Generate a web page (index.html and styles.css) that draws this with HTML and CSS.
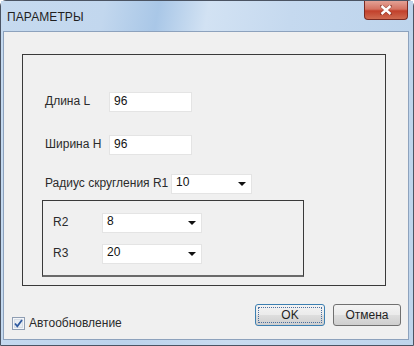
FILE: index.html
```html
<!doctype html>
<html>
  <head>
    <meta charset="utf-8">
    <link rel="stylesheet" href="styles.css">
  </head>
  <body>
    <div class="window">
      <div class="titlebar">
        <span class="title">ПАРАМЕТРЫ</span>
        <div class="close-btn">
          <svg width="12" height="10" viewBox="0 0 12 10">
            <path d="M1.5 1 L10.5 9 M10.5 1 L1.5 9" stroke="#6b2218" stroke-width="3.6" stroke-linecap="square" opacity="0.5"/>
            <path d="M1.5 1 L10.5 9 M10.5 1 L1.5 9" stroke="#ffffff" stroke-width="2.4"/>
          </svg>
        </div>
      </div>
      <div class="client">
        <div class="group">
          <div class="row row-l">
            <span class="lbl lbl-short">Длина L</span>
            <div class="edit">96</div>
          </div>
          <div class="row row-h">
            <span class="lbl lbl-short">Ширина H</span>
            <div class="edit">96</div>
          </div>
          <div class="row row-r1">
            <span class="lbl lbl-long">Радиус скругления R1</span>
            <div class="combo combo-r1"><span>10</span><i class="arrow"></i></div>
          </div>
          <div class="subgroup">
            <div class="row row-r2">
              <span class="lbl lbl-r">R2</span>
              <div class="combo combo-r"><span>8</span><i class="arrow"></i></div>
            </div>
            <div class="row row-r3">
              <span class="lbl lbl-r">R3</span>
              <div class="combo combo-r"><span>20</span><i class="arrow"></i></div>
            </div>
          </div>
        </div>
        <div class="footer">
          <label class="check">
            <svg class="checkbox" width="13" height="13" viewBox="0 0 13 13">
              <rect x="0.5" y="0.5" width="12" height="12" fill="#f4f6f9" stroke="#8f9eb3"/>
              <rect x="2.5" y="2.5" width="8" height="8" fill="#e8edf3" stroke="#d6dde6"/>
              <path d="M3 6.5 L5.3 9.3 L10 3" fill="none" stroke="#2f5aa0" stroke-width="1.8"/>
            </svg>
            <span>Автообновление</span>
          </label>
          <div class="buttons">
            <div class="btn btn-ok"><span>OK</span></div>
            <div class="btn btn-cancel"><span>Отмена</span></div>
          </div>
        </div>
      </div>
    </div>
  </body>
</html>
```

FILE: styles.css
```css
html, body {
  margin: 0;
  padding: 0;
  background: #ffffff;
}

body {
  font-family: "Liberation Sans", Arial, sans-serif;
  font-size: 12px;
  color: #2b2b2b;
}

.window {
  width: 414px;
  height: 346px;
  box-sizing: border-box;
  border: 1px solid #4b5463;
  border-radius: 6px 6px 0 0;
  padding: 0 4px 5px 2px;
  display: flex;
  flex-direction: column;
  background: linear-gradient(90deg, #c4d9ef 0%, #bcd3ec 30%, #c9dcf0 55%, #bfd5ec 100%);
}

.titlebar {
  height: 30px;
  display: flex;
  justify-content: space-between;
  align-items: flex-start;
  background: linear-gradient(100deg, #c6daef 0%, #c2d7ee 25%, #a9c7e7 38%, #d2e2f3 50%, #c5d9ef 70%, #bdd4ec 100%);
  margin: 0 -4px 0 -2px;
  padding: 0 5px 0 6px;
}

.title {
  padding-top: 9px;
  font-size: 12px;
  color: #1f1f1f;
  letter-spacing: 0.1px;
}

.close-btn {
  width: 44px;
  height: 19px;
  box-sizing: border-box;
  border: 1px solid #7a2a22;
  border-top: none;
  border-radius: 0 0 4px 4px;
  background: linear-gradient(180deg, #e3a195 0%, #d47362 45%, #c2402b 55%, #cf6a50 100%);
  display: flex;
  align-items: center;
  justify-content: center;
}

.close-btn svg { display: block; }

.client {
  flex: 1;
  background: #f0f0f0;
  border: 1px solid #8da2bd;
  display: flex;
  flex-direction: column;
}

.group {
  margin: 22px 0 0 18px;
  width: 364px;
  height: 232px;
  box-sizing: border-box;
  border: 1px solid #3a3a3a;
  display: flex;
  flex-direction: column;
}

.row {
  display: flex;
  align-items: center;
  height: 20px;
  margin-left: 22px;
}

.row-l { margin-top: 37px; }
.row-h { margin-top: 23px; }
.row-r1 { margin-top: 19px; }

.lbl {
  margin-top: -3px;
  white-space: nowrap;
}

.lbl-short { width: 64px; }
.lbl-long { width: 126px; }
.lbl-r { width: 49px; }

.edit,
.combo {
  height: 20px;
  box-sizing: border-box;
  background: #ffffff;
  border: 1px solid #e4e4e4;
  padding: 0 4px;
  line-height: 17px;
  color: #111111;
}

.edit { width: 83px; }

.combo {
  display: flex;
  justify-content: space-between;
  align-items: center;
  padding-right: 5px;
}

.combo span { margin-top: -3px; }

.combo-r1 { width: 81px; }
.combo-r { width: 100px; }

.arrow {
  width: 0;
  height: 0;
  border-left: 4px solid transparent;
  border-right: 4px solid transparent;
  border-top: 4px solid #111111;
}

.subgroup {
  margin: 6px 0 0 19px;
  width: 262px;
  height: 77px;
  box-sizing: border-box;
  border: 1px solid #3a3a3a;
  border-bottom: 2px solid #6a6a6a;
  display: flex;
  flex-direction: column;
}

.subgroup .row { margin-left: 10px; }
.row-r2 { margin-top: 12px; }
.row-r3 { margin-top: 11px; }

.footer {
  display: flex;
  justify-content: space-between;
  align-items: flex-start;
  margin-top: 18px;
  padding: 0 7px 0 8px;
}

.check {
  display: flex;
  align-items: center;
  gap: 4px;
  margin-top: 12px;
}

.checkbox { display: block; }

.buttons {
  display: flex;
  gap: 8px;
}

.btn {
  height: 22px;
  box-sizing: border-box;
  border: 1px solid #707070;
  border-radius: 3px;
  background: linear-gradient(180deg, #f3f3f3 0%, #ebebeb 48%, #dddddd 52%, #cfcfcf 100%);
  display: flex;
  align-items: center;
  justify-content: center;
  color: #1f1f1f;
}

.btn-ok {
  width: 70px;
  border-color: #3c7fb1;
  padding: 2px;
}

.btn-ok span {
  flex: 1;
  align-self: stretch;
  border: 1px dotted #4a6fa0;
  display: flex;
  align-items: center;
  justify-content: center;
}

.btn-cancel { width: 68px; }
```
